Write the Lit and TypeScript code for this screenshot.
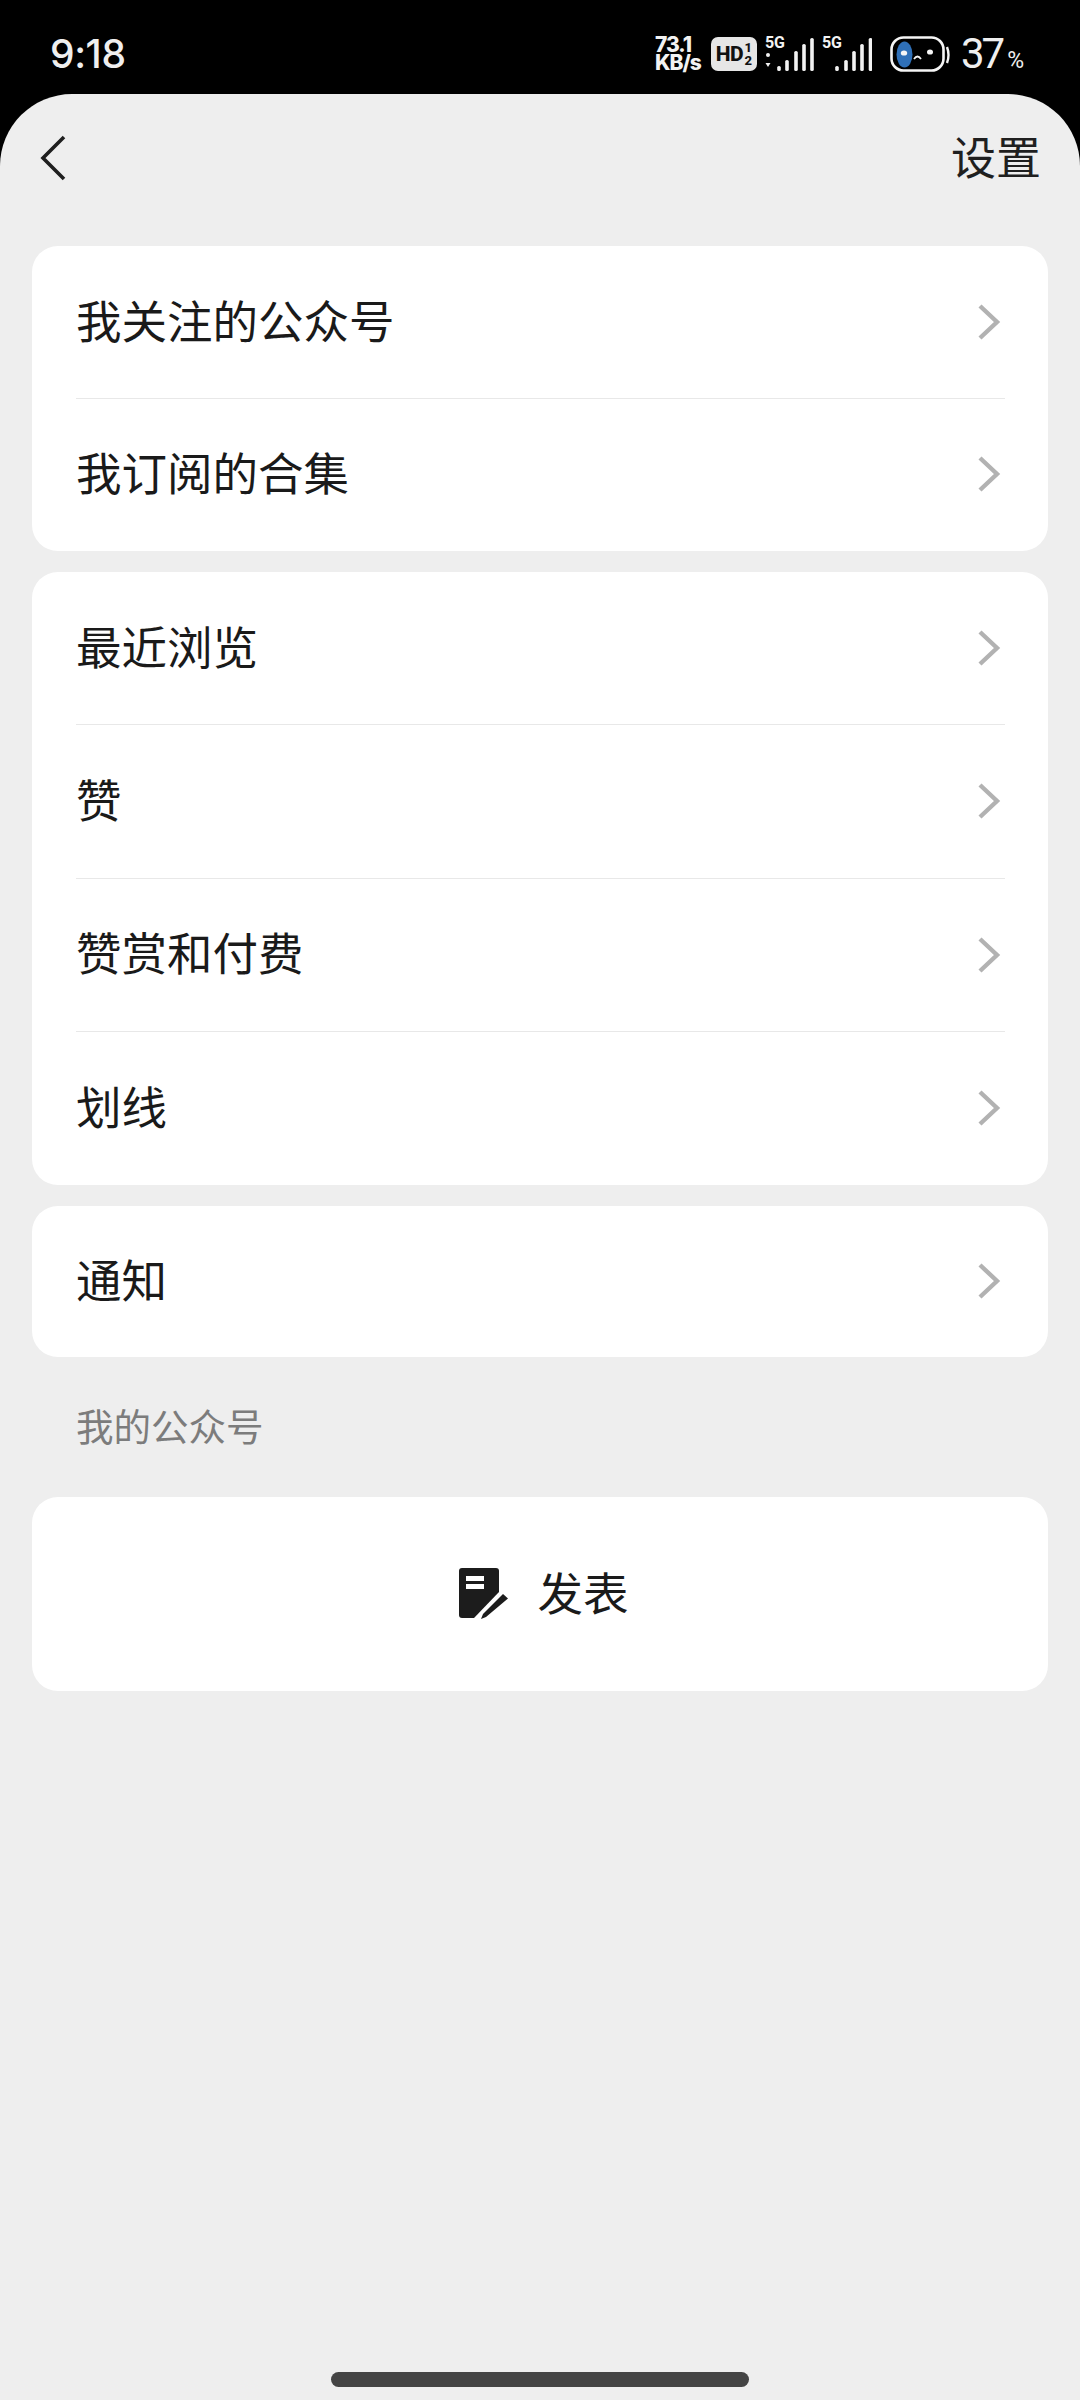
import { LitElement, html, css, svg } from "lit";
import { customElement } from "lit/decorators.js";

const chevron = html`<svg class="chev" width="24" height="36" viewBox="0 0 24 36"><path d="M3 2 L20 18 L3 34" fill="none" stroke="#b2b2b2" stroke-width="4.4"/></svg>`;

function signal(dots: boolean) {
  const bars = dots
    ? [[14, 5], [22, 11], [31, 20], [39, 27], [47, 33]]
    : [[15, 5], [24, 11], [32, 20], [40, 27], [48.5, 33]];
  return html`<div class="sig">
    <span class="g5">5G</span>
    <svg width="50" height="36" viewBox="0 0 50 36">
      ${dots ? svg`<circle cx="3" cy="19" r="2" fill="#f2f2f2"/><path d="M0.5 27h5l-2.5 4z" fill="#f2f2f2"/>` : null}
      ${bars.map(
        ([x, h]) => svg`<rect x="${x - 1.8}" y="${35 - h}" width="3.6" height="${h}" rx="1.6" fill="#f2f2f2"/>`
      )}
    </svg>
  </div>`;
}

@customElement("app-root")
export class AppRoot extends LitElement {
  static styles = css`
    :host { display: flex; flex-direction: column; width: 1080px; height: 2400px; background: #000; font-family: "Noto Sans CJK SC", "Noto Sans", sans-serif; color: #1a1a1a; overflow: hidden; }
    .status { height: 94px; flex: none; display: flex; align-items: center; justify-content: space-between; padding: 0 56px 0 50px; color: #efefef; box-sizing: border-box; }
    .time { font: 500 39px/1 Inter, Roboto, sans-serif; letter-spacing: -0.4px; position: relative; top: 6px; }
    .sright { display: flex; align-items: center; position: relative; top: 7px; }
    .speed { font: 800 21px/18px Inter, Roboto, sans-serif; width: 50px; color: #f2f2f2; letter-spacing: -1px; white-space: pre; }
    .hd { margin-left: 6px; width: 46px; height: 34px; border-radius: 7px; background: #e6e6e6; color: #111; display: flex; align-items: center; justify-content: center; gap: 1px; }
    .hd b { font: 800 21px/1 Roboto, sans-serif; letter-spacing: -0.5px; }
    .hd i { font: 800 13px/13px Roboto, sans-serif; display: block; width: 8px; text-align: center; }
    .sig { margin-left: 8px; position: relative; width: 50px; height: 36px; }
    .sig + .sig { margin-left: 7px; }
    .sig svg { display: block; }
    .g5 { position: absolute; left: 0; top: -1px; font: 700 16px/16px Roboto, sans-serif; color: #f2f2f2; }
    .bat { margin-left: 17px; display: block; }
    .pct { margin-left: 10px; font: 400 42px/1 Roboto, sans-serif; letter-spacing: -3px; color: #efefef; white-space: nowrap; }
    .pct small { font-size: 23px; margin-left: 5px; letter-spacing: 0; }
    .panel { flex: 1; min-height: 0; background: #eeeeee; border-radius: 72px 72px 0 0; display: flex; flex-direction: column; }
    .head { height: 152px; flex: none; box-sizing: border-box; padding: 41px 39px 0 40px; display: flex; justify-content: space-between; align-items: flex-start; }
    .head svg { display: block; }
    .head .set { font-size: 45px; line-height: 44px; margin-top: -1px; color: #1f1f1f; }
    .list { display: flex; flex-direction: column; gap: 21px; padding: 0 32px; }
    .card { background: #fff; border-radius: 26px; display: flex; flex-direction: column; }
    .row { height: 153.25px; box-sizing: border-box; padding: 0 46px 0 44px; display: flex; align-items: center; justify-content: space-between; font-size: 45.5px; line-height: 1; }
    .row span { margin-bottom: 6px; }
    .chev { margin-bottom: 1px; margin-right: 1px; }
    .card.a .row { height: 152.5px; }
    .row.single { height: 151px; }
    .sep { height: 1px; background: #e8e8e8; margin: -1px 43px 0 44px; }
    .label { font-size: 37.5px; line-height: 1; color: #7c7c7c; padding: 49px 0 53px 44px; margin: -21px 0 -21px; }
    .pub { height: 194px; flex-direction: row; align-items: center; justify-content: center; gap: 28px; font-size: 45.5px; line-height: 1; padding-left: 8px; }
    .pub svg { display: block; }
    .pub span { margin-bottom: 3px; }
    .spacer { flex: 1; }
    .pill { flex: none; width: 418px; height: 15px; border-radius: 8px; background: #444; margin: 0 auto 13px; }
  `;

  row(t: string, cls = "") {
    return html`<div class="row ${cls}"><span>${t}</span>${chevron}</div>`;
  }

  render() {
    const sep = html`<div class="sep"></div>`;
    return html`
      <div class="status">
        <span class="time">9:18</span>
        <div class="sright">
          <div class="speed">73.1\nKB/s</div>
          <div class="hd"><b>HD</b><span><i>1</i><i>2</i></span></div>
          ${signal(true)}${signal(false)}
          <svg class="bat" width="62" height="36" viewBox="0 0 62 36">
            <rect x="2.5" y="1.5" width="52" height="33" rx="12" fill="#000" stroke="#f5f5f5" stroke-width="2.6"/>
            <ellipse cx="15.5" cy="18.5" rx="8" ry="13" fill="#2f70b8"/>
            <ellipse cx="15" cy="17" rx="3.2" ry="2.6" fill="#f5f5f5"/>
            <ellipse cx="41" cy="16" rx="3" ry="2.6" fill="#f5f5f5"/>
            <path d="M25 23 q3.5 -5 7 0" fill="none" stroke="#f5f5f5" stroke-width="1.8"/>
            <path d="M58 11 q3 8 0 16" fill="none" stroke="#f5f5f5" stroke-width="2.4"/>
          </svg>
          <span class="pct">37<small>%</small></span>
        </div>
      </div>
      <div class="panel">
        <div class="head">
          <svg width="26" height="48" viewBox="0 0 26 48"><path d="M24 2 L3 23 L24 44" fill="none" stroke="#1f1f1f" stroke-width="3.6"/></svg>
          <span class="set">设置</span>
        </div>
        <div class="list">
          <div class="card a">${this.row("我关注的公众号")}${sep}${this.row("我订阅的合集")}</div>
          <div class="card">${this.row("最近浏览")}${sep}${this.row("赞")}${sep}${this.row("赞赏和付费")}${sep}${this.row("划线")}</div>
          <div class="card">${this.row("通知", "single")}</div>
          <div class="label">我的公众号</div>
          <div class="card pub">
            <svg width="50" height="52" viewBox="0 0 50 52">
              <path d="M3 0 H37 a3 3 0 0 1 3 3 V24 L15 50 H3 a3 3 0 0 1 -3 -3 V3 a3 3 0 0 1 3 -3z" fill="#1c1c1c"/>
              <rect x="7" y="8" width="18" height="5" fill="#fff"/>
              <rect x="7" y="16" width="18" height="5" fill="#fff"/>
              <path d="M44 26 L49 30.5 L27 49 L22 51 L24 46z" fill="#1c1c1c"/>
            </svg>
            <span>发表</span>
          </div>
        </div>
        <div class="spacer"></div>
        <div class="pill"></div>
      </div>
    `;
  }
}
